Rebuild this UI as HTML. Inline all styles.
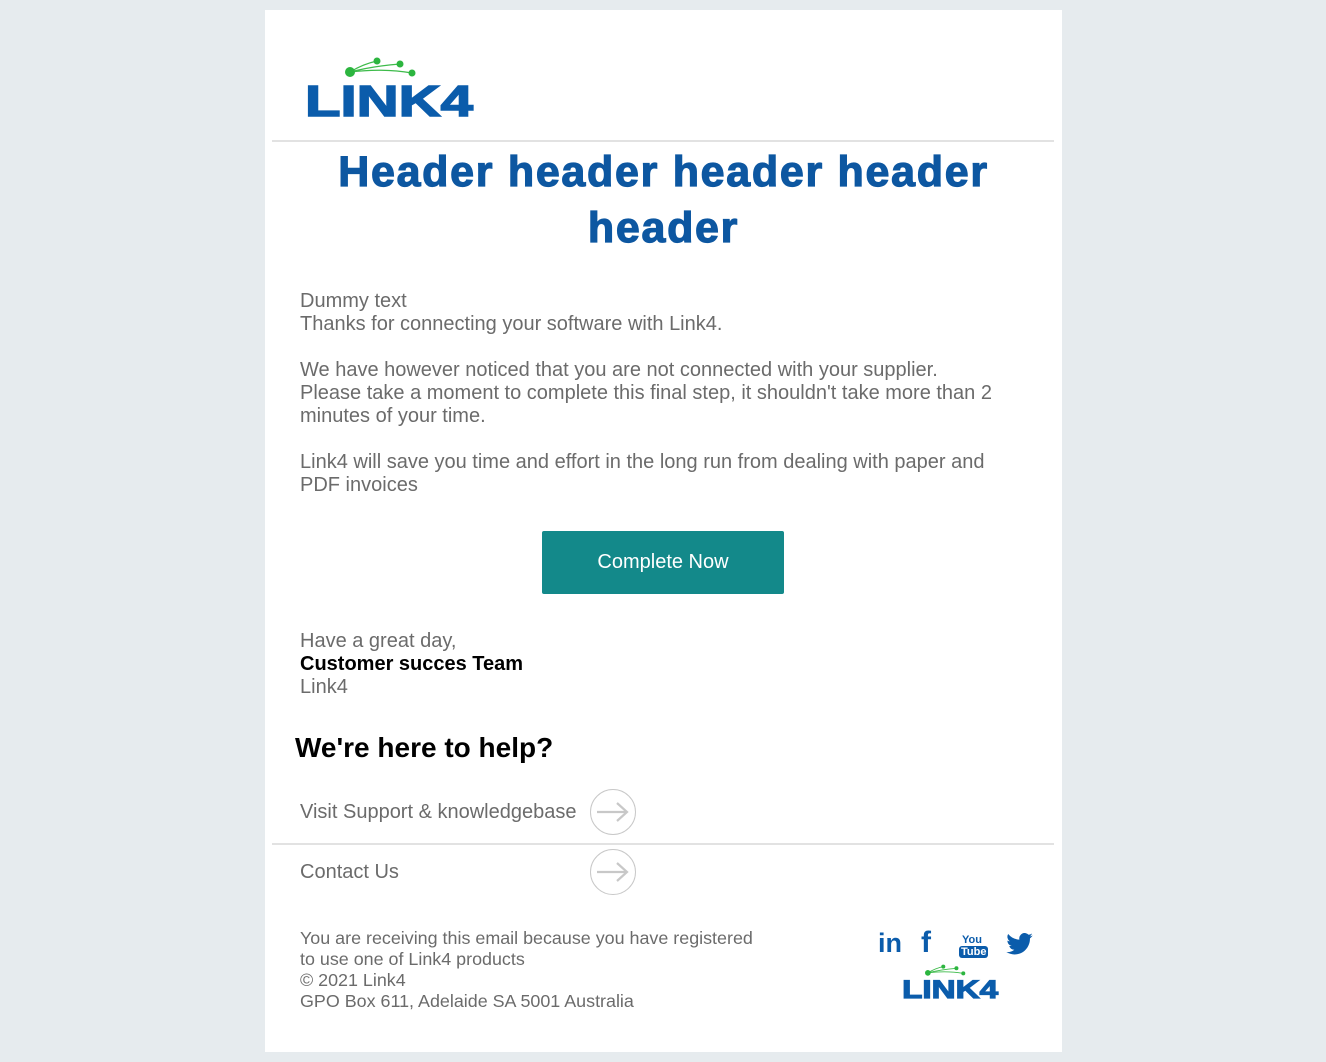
<!DOCTYPE html>
<html><head><meta charset="utf-8"><style>
body{margin:0;background:#e6ebee;font-family:"Liberation Sans",Arial,sans-serif;}
.card{position:absolute;left:265px;top:10px;width:797px;height:1042px;background:#fff;}
.a{position:absolute;}
.t{color:#6b6b6b;font-size:20px;line-height:23px;}
.hr{position:absolute;left:7px;width:782px;height:2px;background:#e2e2e2;}
.circ{position:absolute;width:44px;height:44px;border:1.5px solid #c8c8c8;border-radius:50%;}
</style></head><body>
<div class="card">
<svg class="a" style="left:38px;top:46px" width="175" height="64" viewBox="0 0 175 64">
<g stroke="#3dbb4a" stroke-width="1.2" fill="none"><path d="M47 16 Q60 8 74 5"/><path d="M47 16 Q70 10 97 8"/><path d="M47 16 Q80 12 109 17"/></g>
<g fill="#2cb53f"><circle cx="47" cy="16" r="5"/><circle cx="74" cy="5" r="3.5"/><circle cx="97" cy="8" r="3.5"/><circle cx="109" cy="17" r="3.5"/></g>
<text x="2" y="60" font-family="Liberation Sans" font-weight="bold" font-size="44" fill="#0b5cab" stroke="#0b5cab" stroke-width="1.5" textLength="168" lengthAdjust="spacingAndGlyphs">LINK4</text>
</svg>
<div class="hr" style="top:130px"></div>
<div class="a" style="left:0;top:134px;width:797px;text-align:center;color:#0d57a1;font-weight:bold;font-size:43px;line-height:56px;letter-spacing:1.7px;-webkit-text-stroke:1.2px #0d57a1">Header header header header<br>header</div>
<div class="a t" style="left:35px;top:280px;width:695px">Dummy text<br>Thanks for connecting your software with Link4.<br><br>We have however noticed that you are not connected with your supplier. Please take a moment to complete this final step, it shouldn't take more than 2 minutes of your time.<br><br>Link4 will save you time and effort in the long run from dealing with paper and PDF invoices</div>
<div class="a" style="left:277px;top:521px;width:242px;height:63px;background:#13898a;border-radius:2px;color:#fff;font-size:20px;line-height:63px;text-align:center">Complete Now</div>
<div class="a t" style="left:35px;top:620px">Have a great day,<br><b style="color:#000">Customer succes Team</b><br>Link4</div>
<div class="a" style="left:30px;top:722px;font-size:28px;font-weight:bold;color:#000">We're here to help?</div>
<div class="a t" style="left:35px;top:791px">Visit Support &amp; knowledgebase</div>
<div class="circ" style="left:325px;top:779px"></div>
<svg class="a" style="left:330px;top:790px" width="36" height="24"><path d="M2 12H32M22 3L32 12L22 21" stroke="#c8c8c8" stroke-width="2.2" fill="none"/></svg>
<div class="hr" style="top:833px"></div>
<div class="a t" style="left:35px;top:851px">Contact Us</div>
<div class="circ" style="left:325px;top:839px"></div>
<svg class="a" style="left:330px;top:850px" width="36" height="24"><path d="M2 12H32M22 3L32 12L22 21" stroke="#c8c8c8" stroke-width="2.2" fill="none"/></svg>
<div class="a" style="left:35px;top:918px;color:#6b6b6b;font-size:17.9px;line-height:21px">You are receiving this email because you have registered<br>to use one of Link4 products<br>© 2021 Link4<br>GPO Box 611, Adelaide SA 5001 Australia</div>
<div class="a" style="left:613px;top:918px;color:#0b5cab;font-weight:bold;font-size:27px">in</div>
<div class="a" style="left:656px;top:916px;color:#0b5cab;font-weight:bold;font-size:30px">f</div>
<div class="a" style="left:694px;top:924px;width:26px;text-align:center;color:#0b5cab;font-weight:bold;font-size:11px;line-height:12px">You<br><span style="background:#0b5cab;color:#fff;border-radius:3px;padding:0 2px">Tube</span></div>
<svg class="a" style="left:741px;top:923px" width="27" height="22" viewBox="0 0 24 20"><path fill="#0b5cab" d="M24 2.3c-.9.4-1.8.7-2.8.8 1-.6 1.8-1.6 2.2-2.7-1 .6-2 1-3.1 1.2A4.9 4.9 0 0 0 11.9 6 14 14 0 0 1 1.7.9a4.9 4.9 0 0 0 1.5 6.6c-.8 0-1.6-.2-2.2-.6 0 2.4 1.7 4.4 3.9 4.8-.7.2-1.5.2-2.2.1.6 2 2.4 3.4 4.6 3.4A9.9 9.9 0 0 1 0 17.3 14 14 0 0 0 7.5 19.5c9 0 14-7.5 14-14v-.6c1-.7 1.8-1.6 2.5-2.6z"/></svg>
<svg class="a" style="left:636px;top:953px" width="100" height="38" viewBox="0 0 175 64">
<g stroke="#3dbb4a" stroke-width="1.5" fill="none"><path d="M47 16 Q60 8 74 5"/><path d="M47 16 Q70 10 97 8"/><path d="M47 16 Q80 12 109 17"/></g>
<g fill="#2cb53f"><circle cx="47" cy="16" r="5"/><circle cx="74" cy="5" r="3.5"/><circle cx="97" cy="8" r="3.5"/><circle cx="109" cy="17" r="3.5"/></g>
<text x="2" y="60" font-family="Liberation Sans" font-weight="bold" font-size="44" fill="#0b5cab" stroke="#0b5cab" stroke-width="2" textLength="168" lengthAdjust="spacingAndGlyphs">LINK4</text>
</svg>
</div>
</body></html>
